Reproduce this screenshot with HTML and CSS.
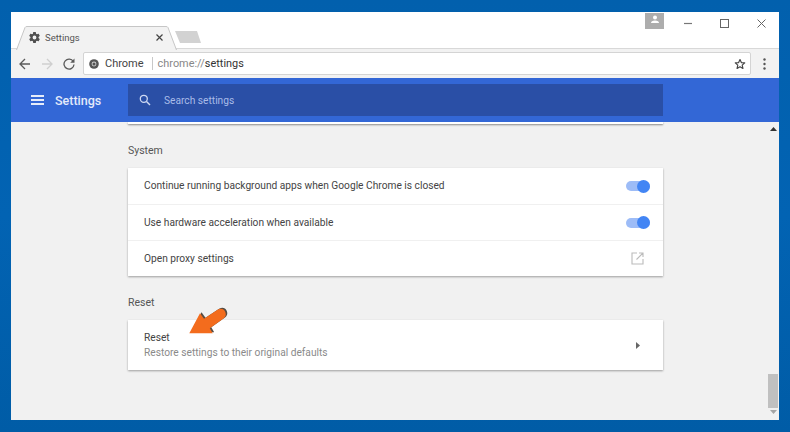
FILE: index.html
```html
<!DOCTYPE html>
<html lang="en">
<head>
<meta charset="utf-8">
<title>Settings</title>
<link rel="stylesheet" href="styles.css">
</head>
<body>
<div class="window">
  <div class="tabstrip">
    <div class="tab">
      <svg class="tab-shape" width="161" height="24" viewBox="0 0 161 24"><path d="M0.500 24 L9 1.500 Q9.500 0.500 11 0.500 L150 0.500 Q151.500 0.500 152 1.500 L160.500 24" fill="#f2f2f2" stroke="#c6c6c6"/></svg>
      <svg class="tab-gear" width="13" height="13" viewBox="0 0 24 24"><path fill="#505050" d="M19.430 12.980c.04-.32.070-.64.070-.98s-.03-.66-.07-.98l2.110-1.650c.19-.15.240-.42.120-.64l-2-3.460c-.12-.22-.39-.30-.61-.22l-2.490 1c-.52-.4-1.080-.73-1.690-.98l-.38-2.650A.49.49 0 0 0 14 2h-4c-.25 0-.46.180-.49.420l-.38 2.650c-.61.250-1.170.59-1.690.98l-2.490-1c-.23-.09-.49 0-.61.220l-2 3.460c-.13.220-.07.490.12.640l2.110 1.650c-.04.320-.07.650-.07.980s.03.660.07.980l-2.110 1.650c-.19.150-.24.420-.12.640l2 3.460c.12.220.39.300.61.220l2.490-1c.52.400 1.080.730 1.690.980l.38 2.650c.03.240.240.420.490.420h4c.25 0 .46-.180.490-.420l.38-2.650c.61-.250 1.170-.590 1.690-.980l2.490 1c.23.090.49 0 .61-.220l2-3.460c.12-.220.070-.490-.12-.640l-2.110-1.650zM12 15.500a3.500 3.500 0 1 1 0-7 3.500 3.500 0 0 1 0 7z"/></svg>
      <span class="tab-title">Settings</span>
      <svg class="tab-close" width="7" height="7" viewBox="0 0 7 7"><path d="M0.500 0.500 L6.500 6.500 M6.500 0.500 L0.500 6.500" stroke="#444" stroke-width="1.200"/></svg>
    </div>
    <svg class="newtab" width="27" height="13" viewBox="0 0 27 13"><path d="M0 0 L22 0 L26 12 L5 12 Z" fill="#d2d2d2"/></svg>
    <div class="caption">
      <div class="avatar"><svg width="10" height="9" viewBox="0 0 10 9"><circle cx="5" cy="2.500" r="2" fill="#fff"/><path d="M1 8 Q1 5.500 5 5.500 Q9 5.500 9 8 Z" fill="#fff"/></svg></div>
      <svg class="cap-btn" width="9" height="9" viewBox="0 0 9 9"><path d="M0 4.500 H8" stroke="#777" stroke-width="1.200"/></svg>
      <svg class="cap-btn cap-max" width="9" height="9" viewBox="0 0 9 9"><rect x="0.500" y="0.500" width="8" height="8" fill="none" stroke="#666"/></svg>
      <svg class="cap-btn cap-close" width="9" height="9" viewBox="0 0 9 9"><path d="M0.500 0.500 L8.500 8.500 M8.500 0.500 L0.500 8.500" stroke="#666" stroke-width="1"/></svg>
    </div>
  </div>
  <div class="toolbar">
    <svg class="nav nav-back" width="12" height="12" viewBox="0 0 12 12"><path d="M11 6 H1.500 M6 1 L1 6 L6 11" fill="none" stroke="#5a5a5a" stroke-width="1.300"/></svg>
    <svg class="nav nav-fwd" width="12" height="12" viewBox="0 0 12 12"><path d="M1 6 H10.500 M6 1 L11 6 L6 11" fill="none" stroke="#cfcfcf" stroke-width="1.300"/></svg>
    <svg class="nav nav-reload" width="12" height="12" viewBox="0 0 12 12"><path d="M10.300 3.500 A5 5 0 1 0 11 6.500" fill="none" stroke="#5a5a5a" stroke-width="1.300"/><path d="M11.500 0.500 V4.800 H7.200 Z" fill="#5a5a5a"/></svg>
    <div class="omnibox">
      <svg class="chrome-icon" width="10" height="10" viewBox="0 0 10 10"><circle cx="5" cy="5" r="4.800" fill="#555"/><circle cx="5" cy="5" r="2.400" fill="#ccc"/><circle cx="5" cy="5" r="1.500" fill="#555"/></svg>
      <span class="site">Chrome</span>
      <span class="sep"></span>
      <span class="url"><span class="url-dim">chrome://</span>settings</span>
      <svg class="star" width="12" height="12" viewBox="0 0 24 24"><path d="M12 3 L14.700 9.200 L21.500 9.800 L16.400 14.300 L17.900 21 L12 17.500 L6.100 21 L7.600 14.300 L2.500 9.800 L9.300 9.200 Z" fill="none" stroke="#444" stroke-width="2.300" stroke-linejoin="round"/></svg>
    </div>
    <svg class="menu-dots" width="3" height="12" viewBox="0 0 3 12"><circle cx="1.500" cy="1.500" r="1.200" fill="#555"/><circle cx="1.500" cy="6" r="1.200" fill="#555"/><circle cx="1.500" cy="10.500" r="1.200" fill="#555"/></svg>
  </div>
  <div class="appbar">
    <div class="burger"><span></span><span></span><span></span></div>
    <span class="app-title">Settings</span>
    <div class="search">
      <svg width="12" height="12" viewBox="0 0 12 12"><circle cx="4.800" cy="4.800" r="3.500" fill="none" stroke="#cfdaf3" stroke-width="1.300"/><path d="M7.500 7.500 L11 11" stroke="#cfdaf3" stroke-width="1.400"/></svg>
      <span class="search-text">Search settings</span>
    </div>
  </div>
  <div class="body">
    <main class="content">
      <div class="card-stub"></div>
      <h2 class="section-title section-system">System</h2>
      <section class="card">
        <div class="row"><span>Continue running background apps when Google Chrome is closed</span><span class="toggle"><span class="knob"></span></span></div>
        <div class="row"><span>Use hardware acceleration when available</span><span class="toggle"><span class="knob"></span></span></div>
        <div class="row"><span>Open proxy settings</span>
          <svg class="ext" width="13" height="13" viewBox="0 0 13 13"><path d="M6 1 H1 V12 H12 V7" fill="none" stroke="#bbb" stroke-width="1.100"/><path d="M8 1 H12 V5 M12 1 L5.500 7.500" fill="none" stroke="#bbb" stroke-width="1.100"/></svg>
        </div>
      </section>
      <h2 class="section-title section-reset">Reset</h2>
      <section class="card">
        <div class="row row-two">
          <div class="two-line"><span>Reset</span><span class="sub">Restore settings to their original defaults</span></div>
          <svg class="chev" width="4" height="7" viewBox="0 0 4 7"><path d="M0 0 L4 3.500 L0 7 Z" fill="#666"/></svg>
        </div>
      </section>
    </main>
    <aside class="scrollbar">
      <svg width="7" height="4" viewBox="0 0 7 4"><path d="M0 4 L3.500 0 L7 4 Z" fill="#333"/></svg>
      <div class="track"><div class="thumb"></div></div>
      <svg width="7" height="4" viewBox="0 0 7 4"><path d="M0 0 L3.500 4 L7 0 Z" fill="#a5a5a5"/></svg>
    </aside>
  </div>
</div>
<svg class="arrow" width="44" height="32" viewBox="0 0 44 32">
  <path d="M3.300 27.300 L14 7.300 L18 12.800 L32 3.600 C35 2 38 3 39.300 6 C40.500 9 39.500 11 37.500 12.500 L23.800 22.300 L26.700 27.300 Z" fill="#2e2318" opacity="0.800" transform="translate(1.500 -1)"/>
  <path d="M3.300 27.300 L14 7.300 L18 12.800 L32 3.600 C35 2 38 3 39.300 6 C40.500 9 39.500 11 37.500 12.500 L23.800 22.300 L26.700 27.300 Z" fill="#f36c1d"/>
</svg>
</body>
</html>
```
FILE: styles.css
```css
* { box-sizing: border-box; }
html, body { margin: 0; height: 100%; }
body {
  width: 790px;
  height: 432px;
  overflow: hidden;
  padding: 12px 11px 12px 11px;
  background: linear-gradient(#0260ad, #0263b3 50%, #005ca6);
  font-family: Roboto, "Liberation Sans", sans-serif;
  position: relative;
}
.window {
  width: 768px;
  height: 408px;
  display: flex;
  flex-direction: column;
  background: #fff;
}

/* tab strip */
.tabstrip {
  height: 37px;
  flex: none;
  display: flex;
  align-items: flex-end;
  padding-left: 5px;
  background: #fff;
  position: relative;
  border-bottom: 1px solid #d8d8d8;
}
.tab {
  width: 161px;
  height: 23px;
  position: relative;
  display: flex;
  align-items: center;
  padding: 0 14px 0 12px;
  margin-bottom: -1px;
  z-index: 1;
  flex: none;
}
.tab-shape { position: absolute; left: 0; top: 0; }
.tab-gear, .tab-title, .tab-close { position: relative; }
.tab-title {
  margin-left: 4px;
  font-size: 9.500px;
  color: #555;
  flex: 1;
}
.newtab { margin: 0 0 4px -2px; flex: none; }
.caption {
  position: absolute;
  right: 13px;
  top: 0;
  display: flex;
  align-items: flex-start;
}
.avatar {
  width: 19px;
  height: 16px;
  margin: 1px 20px 0 0;
  background: #adadad;
  display: flex;
  justify-content: center;
  padding-top: 2px;
}
.cap-btn { margin: 7px 0 0 0; }
.cap-max { margin-left: 27px; }
.cap-close { margin-left: 28px; }

/* toolbar */
.toolbar {
  height: 29px;
  flex: none;
  display: flex;
  align-items: center;
  background: #f2f2f2;
  padding: 0 0 0 8px;
}
.nav { flex: none; }
.nav-fwd { margin-left: 10px; }
.nav-reload { margin-left: 10px; }
.omnibox {
  width: 668px;
  height: 23px;
  margin-left: 8px;
  background: #fff;
  border: 1px solid #d4d4d4;
  border-radius: 2px;
  display: flex;
  align-items: center;
  padding: 0 4px 0 5px;
  flex: none;
}
.site { margin-left: 6px; font-size: 11px; color: #444; }
.sep { width: 1px; height: 13px; background: #c8c8c8; margin: 0 5px 0 8px; }
.url { font-size: 10.900px; color: #333; flex: 1; }
.url-dim { color: #888; }
.menu-dots { margin-left: 12px; flex: none; }

/* app bar */
.appbar {
  height: 44px;
  flex: none;
  background: #3367d6;
  display: flex;
  align-items: center;
  padding-left: 20px;
  position: relative;
  z-index: 2;
}
.burger {
  width: 13px;
  height: 10px;
  display: flex;
  flex-direction: column;
  justify-content: space-between;
}
.burger span { display: block; height: 2px; background: #e6ecfa; }
.app-title {
  margin-left: 11px;
  width: 73px;
  font-size: 12.500px;
  font-weight: 500;
  color: #e3eafa;
}
.search {
  width: 535px;
  height: 32px;
  background: #2a4fa6;
  display: flex;
  align-items: center;
  padding-left: 11px;
}
.search-text {
  margin-left: 13px;
  font-size: 10.200px;
  color: #a9bce8;
}

/* body */
.body {
  flex: 1;
  min-height: 0;
  display: flex;
  background: #f1f1f1;
}
.content {
  flex: 1;
  padding-left: 117px;
}
.card-stub {
  width: 535px;
  height: 2px;
  background: #fff;
  box-shadow: 0 1px 2px rgba(0, 0, 0, 0.45);
}
.section-title {
  margin: 0;
  font-size: 10.500px;
  font-weight: 400;
  color: #555;
  line-height: 14px;
}
.section-system { padding: 20px 0 10px; }
.section-reset { padding: 20px 0 10px; }
.card {
  width: 535px;
  background: #fff;
  box-shadow: 0 1px 2px rgba(0, 0, 0, 0.35);
}
.row {
  height: 36px;
  display: flex;
  align-items: center;
  justify-content: space-between;
  padding: 0 19px 0 16px;
  font-size: 10.200px;
  color: #444;
}
.row > span:first-child { margin-bottom: 1px; }
.row + .row { border-top: 1px solid #f0f0f0; }
.row-two { height: 50px; padding-right: 23px; }
.two-line {
  display: flex;
  flex-direction: column;
  gap: 2px;
  line-height: 13px;
}
.sub { color: #8a8a8a; }
.toggle {
  width: 24px;
  height: 10px;
  margin-right: -6px;
  border-radius: 5px;
  background: #9dbcf7;
  position: relative;
  flex: none;
}
.knob {
  position: absolute;
  right: 0;
  top: -1.500px;
  width: 13px;
  height: 13px;
  border-radius: 50%;
  background: #4285f4;
}

/* scrollbar */
.scrollbar {
  width: 12px;
  flex: none;
  display: flex;
  flex-direction: column;
  align-items: center;
  padding: 5px 0 6px;
}
.track {
  flex: 1;
  width: 100%;
  display: flex;
  align-items: flex-end;
  padding: 0 1px 2px;
}
.thumb {
  width: 100%;
  height: 34px;
  background: #c0c0c0;
}

/* overlay arrow */
.arrow {
  position: absolute;
  left: 186px;
  top: 306px;
}
```
